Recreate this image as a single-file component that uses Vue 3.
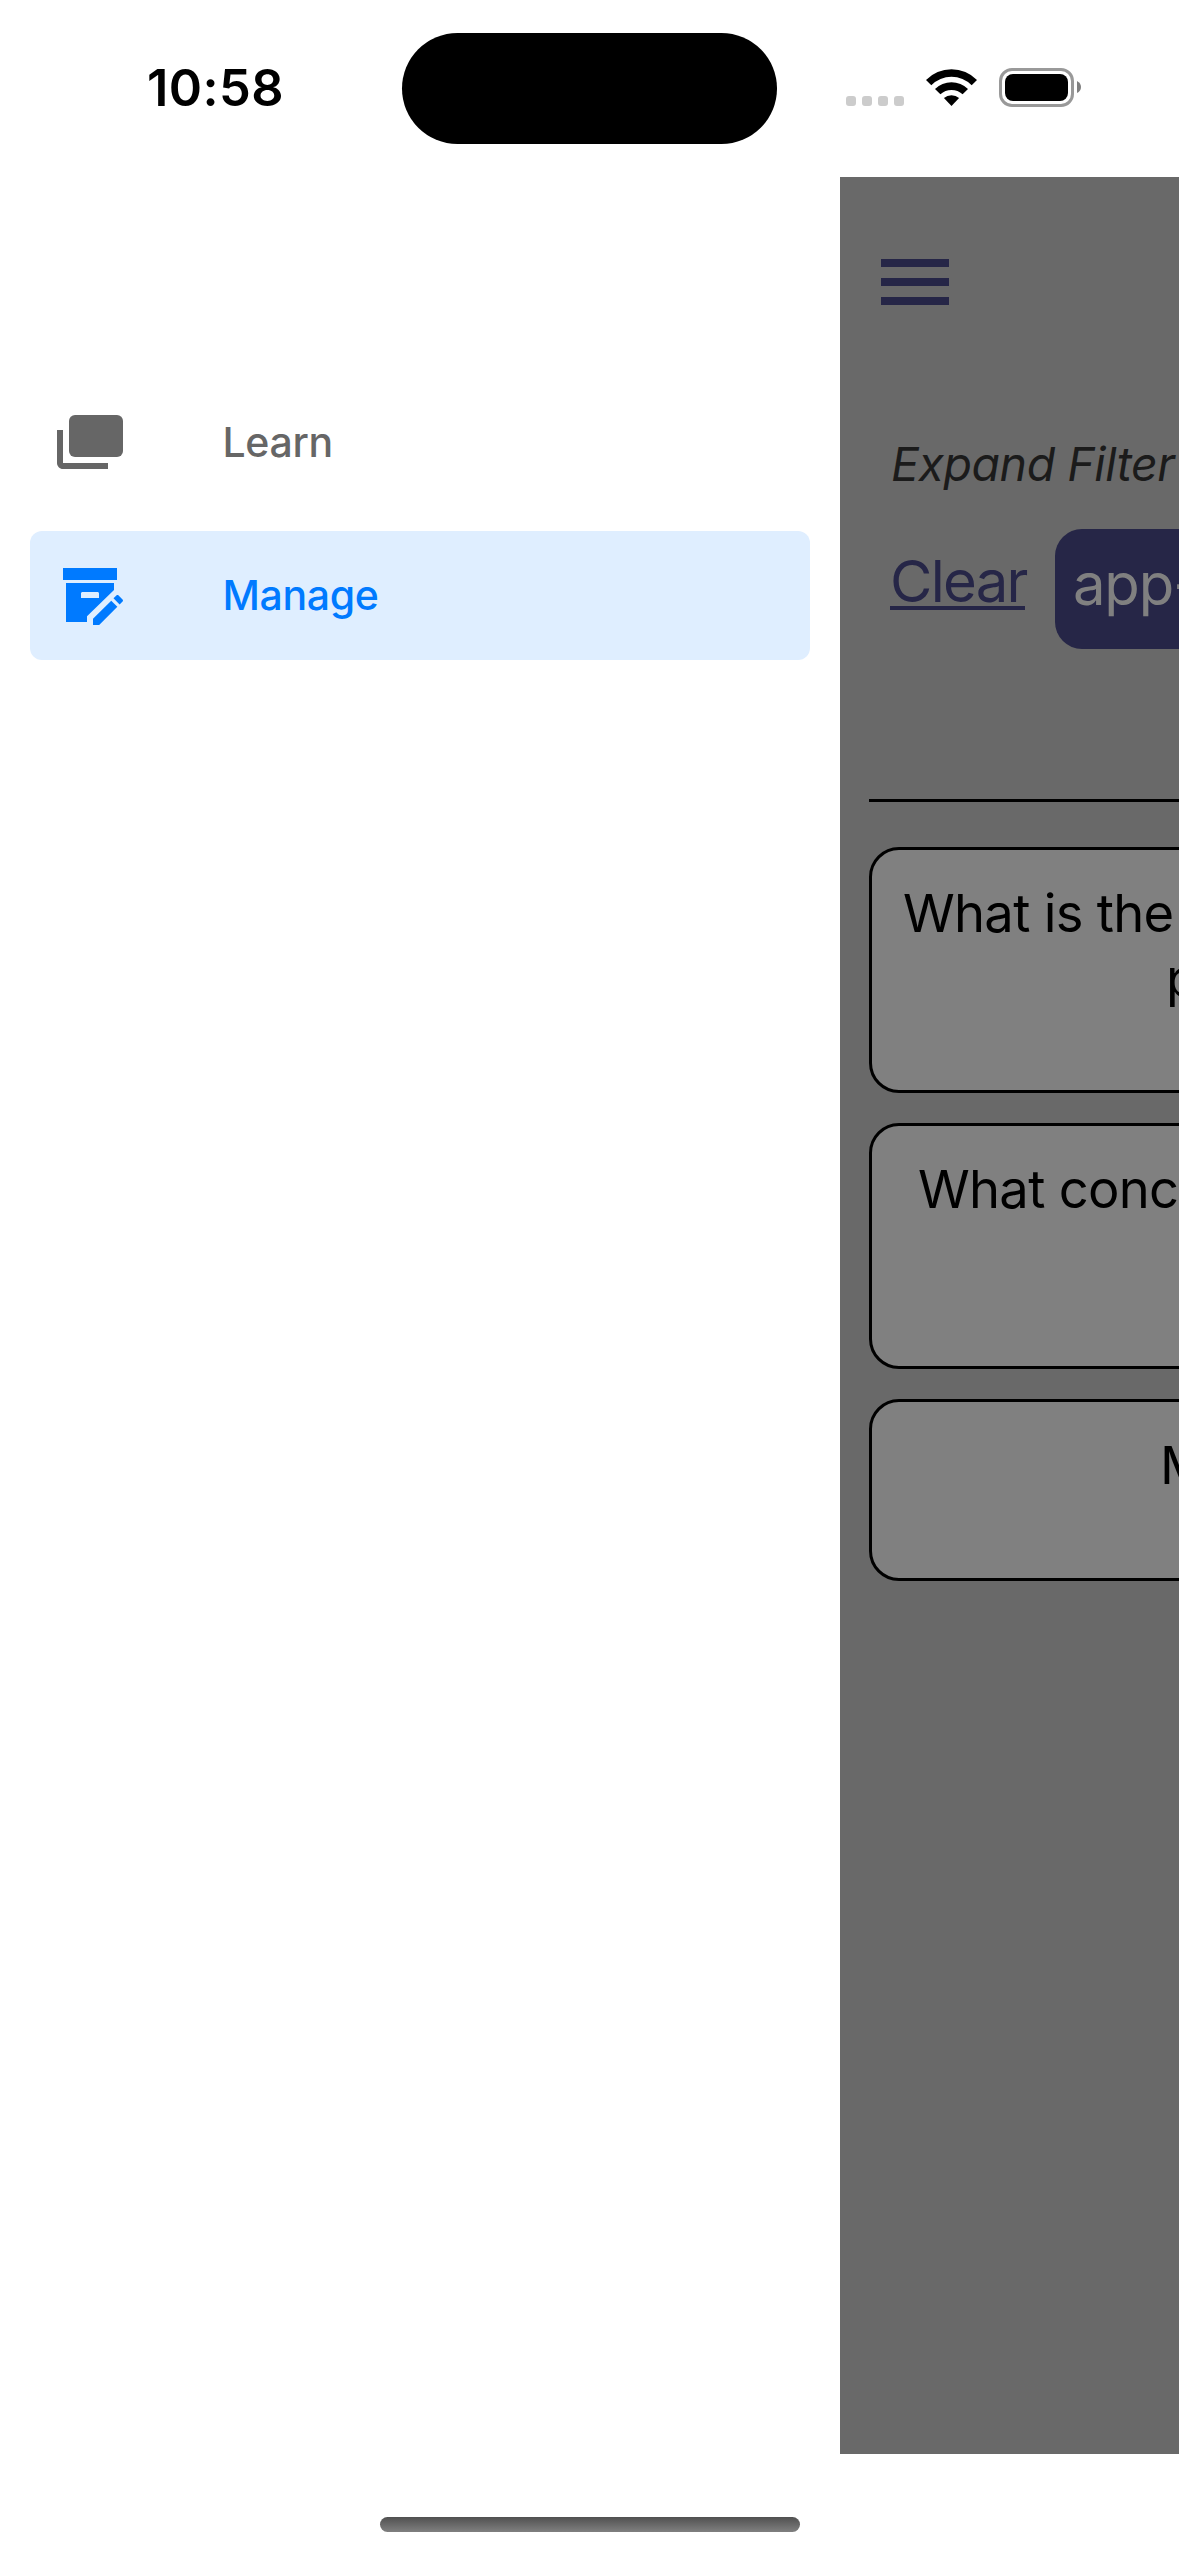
<script setup>
const navItems = [
  { id: 'learn', label: 'Learn', active: false },
  { id: 'manage', label: 'Manage', active: true },
]
const cards = [
  { id: 1, size: 'tall', lines: [{ text: 'What is the', cls: 'l-a' }, { text: 'p', cls: 'l-b' }] },
  { id: 2, size: 'tall', lines: [{ text: 'What conc', cls: 'l-c' }] },
  { id: 3, size: 'short', lines: [{ text: 'M', cls: 'l-d' }] },
]
</script>

<template>
  <div class="screen">
    <header class="status">
      <div class="time">10:58</div>
      <div class="island"></div>
      <div class="dots"><i v-for="n in 4" :key="n"></i></div>
      <svg class="wifi" viewBox="926 69 51 37" width="51" height="37">
        <path d="M926 80A35.5 35.5 0 0 1 977 80L971.7 85.2A28.4 28.4 0 0 0 931.3 85.2Z" />
        <path d="M935 88.9A23.5 23.5 0 0 1 968 88.9L962.6 94.2A16.5 16.5 0 0 0 940.4 94.2Z" />
        <path d="M943.9 98A11.5 11.5 0 0 1 959.1 98L951.5 106Z" />
      </svg>
      <div class="battery"><div class="charge"></div></div>
      <svg class="nub" width="4" height="12" viewBox="0 0 4 12"><path d="M0 0Q4 2 4 6T0 12Z" /></svg>
    </header>

    <div class="body">
      <nav class="drawer">
        <div v-for="item in navItems" :key="item.id" class="nav-item" :class="{ active: item.active }">
          <svg width="72" height="72" viewBox="0 0 24 24">
            <template v-if="item.id === 'learn'">
              <rect x="5" y="3" width="18" height="14" rx="2" />
              <path d="M1 8H3V19H18V21H3C1.9 21 1 20.1 1 19Z" />
            </template>
            <template v-else>
              <path d="M3 3H21V7H3Z" />
              <path d="M4 8H20V10.35L11 19.11V21H4ZM9.5 11C9.22 11 9 11.22 9 11.5V13H15V11.5C15 11.22 14.78 11 14.5 11Z" fill-rule="evenodd" />
              <path d="M13 19.94V22H15.06L21.12 15.93L19.08 13.88ZM22.85 14.19L21.87 15.17L19.83 13.12L20.8 12.15C21 11.95 21.33 11.95 21.53 12.15L22.85 13.47C23.05 13.67 23.05 14 22.85 14.19Z" />
            </template>
          </svg>
          <span class="label">{{ item.label }}</span>
        </div>
      </nav>

      <main class="page">
        <div class="burger"><b></b><b></b><b></b></div>
        <div class="expand">Expand Filter</div>
        <div class="filters">
          <span class="clear"><span class="clear-text">Clear</span></span>
          <span class="chip">app-</span>
        </div>
        <div class="rule"></div>
        <div class="cards">
          <div v-for="c in cards" :key="c.id" class="card" :class="c.size">
            <div v-for="l in c.lines" :key="l.text" class="line" :class="l.cls">{{ l.text }}</div>
          </div>
        </div>
      </main>
    </div>

    <footer class="home"><div class="home-bar"></div></footer>
  </div>
</template>

<style>
body { margin: 0; background: #fff; }
</style>

<style scoped>
.screen {
  width: 1179px;
  height: 2556px;
  display: flex;
  flex-direction: column;
  overflow: hidden;
  background: #fff;
  font-family: Inter, Roboto, sans-serif;
}
.status { height: 177px; display: flex; align-items: flex-start; flex: none; }
.time {
  width: 255px;
  padding-left: 147px;
  line-height: 176px;
  font-size: 50.5px;
  font-weight: 600;
  letter-spacing: 0.4px;
  white-space: nowrap;
}
.island { width: 375px; height: 111px; margin-top: 33px; border-radius: 56px; background: #000; }
.dots { display: flex; gap: 6px; margin: 96px 0 0 69px; }
.dots i { width: 10px; height: 10px; border-radius: 3px; background: #ccc; }
.wifi { margin: 69px 0 0 22px; }
.battery {
  box-sizing: border-box;
  width: 75px;
  height: 39px;
  margin: 68px 0 0 22px;
  padding: 3px;
  border: 3px solid #999;
  border-radius: 13px;
}
.charge { height: 27px; border-radius: 8px; background: #000; }
.nub { margin: 81px 0 0 3px; fill: #808080; }

.body { display: flex; height: 2277px; flex: none; }
.drawer { box-sizing: border-box; width: 840px; padding: 201px 30px 0; display: flex; flex-direction: column; gap: 24px; flex: none; }
.nav-item {
  box-sizing: border-box;
  height: 129px;
  padding-left: 24px;
  display: flex;
  align-items: center;
  gap: 96px;
  border-radius: 12px;
  color: #666;
  fill: #666;
  font-size: 41px;
  font-weight: 500;
  letter-spacing: -0.35px;
}
.nav-item.active { background: #dfeeff; color: #007aff; fill: #007aff; }
.nav-item svg { margin-top: -1px; }
.label { padding: 0 0 2px 0.5px; }

.page { width: 339px; background: #696969; overflow: hidden; white-space: nowrap; }
.burger { display: flex; flex-direction: column; gap: 11px; padding: 82px 0 0 41px; }
.burger b { width: 68px; height: 8px; background: #262647; }
.expand { margin: 129px 0 0 51px; line-height: 60px; font-size: 46.5px; font-style: italic; letter-spacing: -0.45px; color: #1b1b1b; }
.filters { display: flex; align-items: flex-start; height: 120px; margin: 35px 0 0 50px; color: #262647; font-size: 58px; letter-spacing: -1.2px; }
.clear { flex: none; width: 165px; padding-top: 16px; line-height: 72px; letter-spacing: -1.7px; }
.clear-text { display: block; box-sizing: border-box; width: 135px; height: 65px; border-bottom: 4px solid #262647; }
.chip { box-sizing: border-box; flex: none; width: 300px; height: 120px; padding: 0 0 10px 18px; line-height: 110px; border-radius: 27px; background: #262647; color: #808080; }
.rule { height: 3px; margin: 150px 0 0 29px; background: #000; }
.cards { display: flex; flex-direction: column; gap: 30px; margin: 45px 0 0 29px; }
.card { box-sizing: border-box; width: 1121px; padding-top: 31px; border: 3px solid #000; border-radius: 30px; background: #808080; font-size: 52.5px; line-height: 65px; letter-spacing: -0.7px; color: #000; }
.card.tall { height: 246px; }
.card.short { height: 182px; }
.l-a { padding-left: 31px; }
.l-b { padding-left: 294px; }
.l-c { padding-left: 46px; }
.l-d { padding-left: 288px; }

.home { flex: 1; display: flex; justify-content: center; padding-top: 63px; }
.home-bar { width: 420px; height: 15px; border-radius: 8px; background: linear-gradient(#505050, #808080); }
</style>
